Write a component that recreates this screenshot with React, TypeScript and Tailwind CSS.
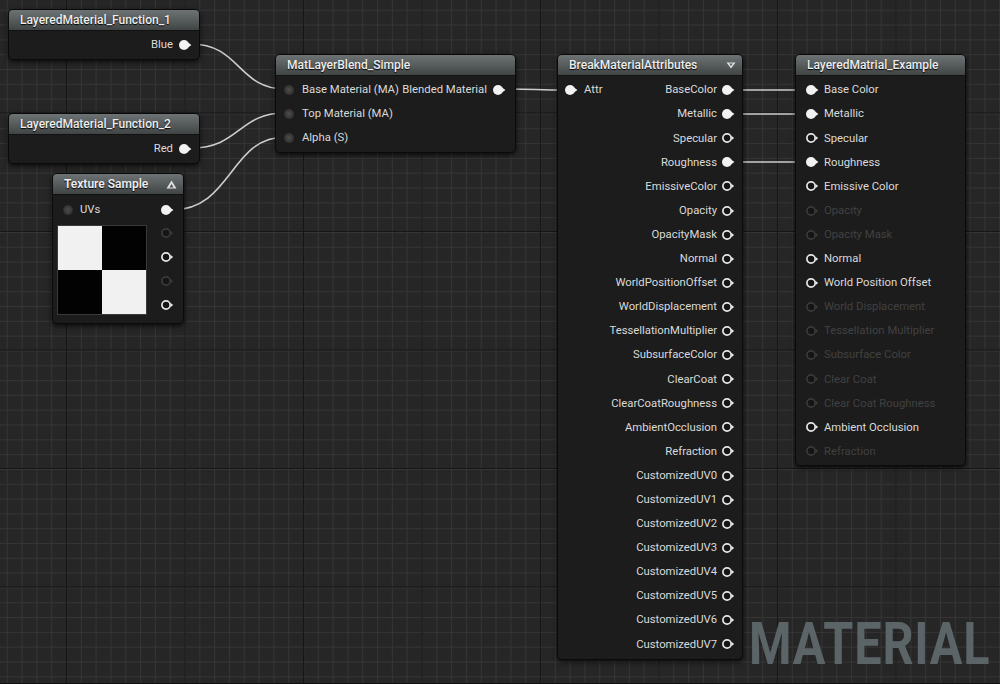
import React from 'react';

type PinKind = 'on' | 'off' | 'dim' | 'in';

// Small pin glyph: circle plus arrow tip on the right
const Pin = ({ kind }: { kind: PinKind }) => {
  if (kind === 'in') {
    return (
      <svg width="14" height="12" viewBox="0 0 14 12" className="shrink-0">
        <circle cx="5" cy="6" r="4.8" fill="#3b3b3b" stroke="#2c2c2c" strokeWidth="1" />
        <circle cx="5" cy="6" r="2.4" fill="#464646" />
      </svg>
    );
  }
  if (kind === 'on') {
    return (
      <svg width="14" height="12" viewBox="0 0 14 12" className="shrink-0">
        <circle cx="5" cy="6" r="5" fill="#f2f2f2" />
        <path d="M9 3.4 L12.4 6 L9 8.6 Z" fill="#f2f2f2" />
      </svg>
    );
  }
  if (kind === 'off') {
    return (
      <svg width="14" height="12" viewBox="0 0 14 12" className="shrink-0">
        <circle cx="5" cy="6" r="4.1" fill="#151515" stroke="#e6e6e6" strokeWidth="1.7" />
        <path d="M9.4 3.7 L12.2 6 L9.4 8.3 Z" fill="#e6e6e6" />
      </svg>
    );
  }
  return (
    <svg width="14" height="12" viewBox="0 0 14 12" className="shrink-0">
      <circle cx="5" cy="6" r="4.1" fill="#151515" stroke="#3a3a3a" strokeWidth="1.7" />
      <path d="M9.4 3.7 L12.2 6 L9.4 8.3 Z" fill="#3a3a3a" />
    </svg>
  );
};

const Header = ({ title, icon, bold }: { title: string; icon?: React.ReactNode; bold?: boolean }) => (
  <div className="flex items-center justify-between h-[21px] pl-[11px] pr-[6px] rounded-t-[4px] bg-gradient-to-b from-[#6d7274] via-[#575c5d] to-[#404445] border-b border-[#121212]">
    <span
      className={`whitespace-nowrap text-[12px] leading-none text-[#eeeeee] [text-shadow:0_1px_1px_#000] ${bold ? 'font-semibold' : 'font-medium'}`}
    >
      {title}
    </span>
    {icon}
  </div>
);

const nodeBase =
  'absolute rounded-[5px] border border-[#0a0a0a] bg-[#1c1c1c] shadow-[0_2px_5px_rgba(0,0,0,0.7)] font-["Roboto",sans-serif]';

const breakOutputs: { label: string; pin: PinKind }[] = [
  { label: 'BaseColor', pin: 'on' },
  { label: 'Metallic', pin: 'on' },
  { label: 'Specular', pin: 'off' },
  { label: 'Roughness', pin: 'on' },
  { label: 'EmissiveColor', pin: 'off' },
  { label: 'Opacity', pin: 'off' },
  { label: 'OpacityMask', pin: 'off' },
  { label: 'Normal', pin: 'off' },
  { label: 'WorldPositionOffset', pin: 'off' },
  { label: 'WorldDisplacement', pin: 'off' },
  { label: 'TessellationMultiplier', pin: 'off' },
  { label: 'SubsurfaceColor', pin: 'off' },
  { label: 'ClearCoat', pin: 'off' },
  { label: 'ClearCoatRoughness', pin: 'off' },
  { label: 'AmbientOcclusion', pin: 'off' },
  { label: 'Refraction', pin: 'off' },
  { label: 'CustomizedUV0', pin: 'off' },
  { label: 'CustomizedUV1', pin: 'off' },
  { label: 'CustomizedUV2', pin: 'off' },
  { label: 'CustomizedUV3', pin: 'off' },
  { label: 'CustomizedUV4', pin: 'off' },
  { label: 'CustomizedUV5', pin: 'off' },
  { label: 'CustomizedUV6', pin: 'off' },
  { label: 'CustomizedUV7', pin: 'off' },
];

const resultInputs: { label: string; pin: PinKind }[] = [
  { label: 'Base Color', pin: 'on' },
  { label: 'Metallic', pin: 'on' },
  { label: 'Specular', pin: 'off' },
  { label: 'Roughness', pin: 'on' },
  { label: 'Emissive Color', pin: 'off' },
  { label: 'Opacity', pin: 'dim' },
  { label: 'Opacity Mask', pin: 'dim' },
  { label: 'Normal', pin: 'off' },
  { label: 'World Position Offset', pin: 'off' },
  { label: 'World Displacement', pin: 'dim' },
  { label: 'Tessellation Multiplier', pin: 'dim' },
  { label: 'Subsurface Color', pin: 'dim' },
  { label: 'Clear Coat', pin: 'dim' },
  { label: 'Clear Coat Roughness', pin: 'dim' },
  { label: 'Ambient Occlusion', pin: 'off' },
  { label: 'Refraction', pin: 'dim' },
];

const label = 'whitespace-nowrap text-[11.3px] leading-none text-[#dadada]';

const App = () => {
  return (
    <div className="relative w-[1000px] h-[684px] overflow-hidden bg-[#262626] border-b border-[#0e0e0e]">
      {/* grid */}
      <svg className="absolute inset-0" width="1000" height="684">
        <defs>
          <pattern id="minor" patternUnits="userSpaceOnUse" x="6.75" y="9.75" width="14.8125" height="14.8125">
            <rect x="0" y="0" width="1" height="14.8125" fill="#353535" />
            <rect x="0" y="0" width="14.8125" height="1" fill="#353535" />
          </pattern>
          <pattern id="major" patternUnits="userSpaceOnUse" x="66" y="112.5" width="118.5" height="118.5">
            <rect x="0" y="0" width="1" height="118.5" fill="#161616" />
            <rect x="0" y="0" width="118.5" height="1" fill="#161616" />
          </pattern>
        </defs>
        <rect width="1000" height="684" fill="url(#minor)" />
        <rect width="1000" height="684" fill="url(#major)" />
      </svg>

      {/* watermark */}
      <div className="absolute left-[749px] top-[614px] origin-left [transform:scaleX(0.81)] whitespace-nowrap font-['Roboto',sans-serif] font-bold text-[60px] leading-none tracking-[1px] text-[#5b6467]">
        MATERIAL
      </div>

      {/* wires */}
      <svg className="absolute inset-0" width="1000" height="684" fill="none" stroke="#cdcdcd" strokeWidth="1.6">
        <path d="M191 44 C240 44 238 89 285 89" />
        <path d="M191 148 C240 148 238 113 285 113" />
        <path d="M172 210 C232 210 230 137 285 137" />
        <path d="M506 89 C535 89 537 90 566 90" />
        <path d="M734 90 L806 90" />
        <path d="M734 114 L806 114" />
        <path d="M734 162 L806 162" />
      </svg>

      {/* LayeredMaterial_Function_1 */}
      <div className={`${nodeBase} left-[8px] top-[9px] w-[192px]`}>
        <Header title="LayeredMaterial_Function_1" />
        <div className="flex items-center justify-end gap-[6px] h-[24px] mt-[2px] mb-[2px] pr-[6px]">
          <span className={label}>Blue</span>
          <Pin kind="on" />
        </div>
      </div>

      {/* LayeredMaterial_Function_2 */}
      <div className={`${nodeBase} left-[8px] top-[113px] w-[192px]`}>
        <Header title="LayeredMaterial_Function_2" />
        <div className="flex items-center justify-end gap-[6px] h-[24px] mt-[2px] mb-[2px] pr-[6px]">
          <span className={label}>Red</span>
          <Pin kind="on" />
        </div>
      </div>

      {/* Texture Sample */}
      <div className={`${nodeBase} left-[52px] top-[173px] w-[132px]`}>
        <Header
          title="Texture Sample"
          bold
          icon={
            <svg width="11" height="9" viewBox="0 0 11 9">
              <path d="M5.5 0.5 L10.5 8.5 L0.5 8.5 Z" fill="#e0e0e0" />
              <path d="M5.5 4 L7.6 7.4 L3.4 7.4 Z" fill="#555" />
            </svg>
          }
        />
        <div className="flex items-center justify-between h-[24px] mt-[3px] pl-[10px] pr-[8px]">
          <div className="flex items-center gap-[3px]">
            <Pin kind="in" />
            <span className={label}>UVs</span>
          </div>
          <Pin kind="on" />
        </div>
        <div className="flex justify-between pl-[4px] pr-[8px] pb-[6px]">
          <div className="mt-[3px] grid grid-cols-2 w-[90px] h-[90px] border border-[#3a3a3a]">
            <div className="bg-[#f0f1f0]" />
            <div className="bg-[#020202]" />
            <div className="bg-[#020202]" />
            <div className="bg-[#f0f1f0]" />
          </div>
          <div className="flex flex-col -mt-[1px]">
            <div className="h-[24px] flex items-center"><Pin kind="dim" /></div>
            <div className="h-[24px] flex items-center"><Pin kind="off" /></div>
            <div className="h-[24px] flex items-center"><Pin kind="dim" /></div>
            <div className="h-[24px] flex items-center"><Pin kind="off" /></div>
          </div>
        </div>
      </div>

      {/* MatLayerBlend_Simple */}
      <div className={`${nodeBase} left-[275px] top-[54px] w-[241px]`}>
        <Header title="MatLayerBlend_Simple" />
        <div className="pt-[2px] pb-[2px]">
          <div className="flex items-center justify-between h-[24px] pl-[8px] pr-[8px]">
            <div className="flex items-center gap-[4px]">
              <Pin kind="in" />
              <span className={label}>Base Material (MA)</span>
            </div>
            <div className="flex items-center gap-[6px]">
              <span className={label}>Blended Material</span>
              <Pin kind="on" />
            </div>
          </div>
          <div className="flex items-center gap-[4px] h-[24px] pl-[8px]">
            <Pin kind="in" />
            <span className={label}>Top Material (MA)</span>
          </div>
          <div className="flex items-center gap-[4px] h-[24px] pl-[8px]">
            <Pin kind="in" />
            <span className={label}>Alpha (S)</span>
          </div>
        </div>
      </div>

      {/* BreakMaterialAttributes */}
      <div className={`${nodeBase} left-[557px] top-[54px] w-[186px] h-[606px]`}>
        <Header
          title="BreakMaterialAttributes"
          icon={
            <svg width="10" height="7" viewBox="0 0 10 7">
              <path d="M0.5 0.5 L9.5 0.5 L5 6.5 Z" fill="#e0e0e0" />
              <path d="M3.2 1.6 L6.8 1.6 L5 4.2 Z" fill="#666" />
            </svg>
          }
        />
        <div className="pt-[2px]">
          {breakOutputs.map((o, i) => (
            <div key={o.label} className="flex items-center justify-between h-[24.1px] pl-[7px] pr-[6px]">
              {i === 0 ? (
                <div className="flex items-center gap-[5px]">
                  <Pin kind="on" />
                  <span className={label}>Attr</span>
                </div>
              ) : (
                <span />
              )}
              <div className="flex items-center gap-[5px]">
                <span className={label}>{o.label}</span>
                <Pin kind={o.pin} />
              </div>
            </div>
          ))}
        </div>
      </div>

      {/* LayeredMatrial_Example */}
      <div className={`${nodeBase} left-[795px] top-[54px] w-[171px] h-[412px]`}>
        <Header title="LayeredMatrial_Example" />
        <div className="pt-[2px]">
          {resultInputs.map((r) => (
            <div key={r.label} className="flex items-center gap-[4px] h-[24.1px] pl-[10px]">
              <Pin kind={r.pin} />
              <span
                className={`whitespace-nowrap text-[11.3px] leading-none ${r.pin === 'dim' ? 'text-[#414141]' : 'text-[#dadada]'}`}
              >
                {r.label}
              </span>
            </div>
          ))}
        </div>
      </div>
    </div>
  );
};

export default App;
